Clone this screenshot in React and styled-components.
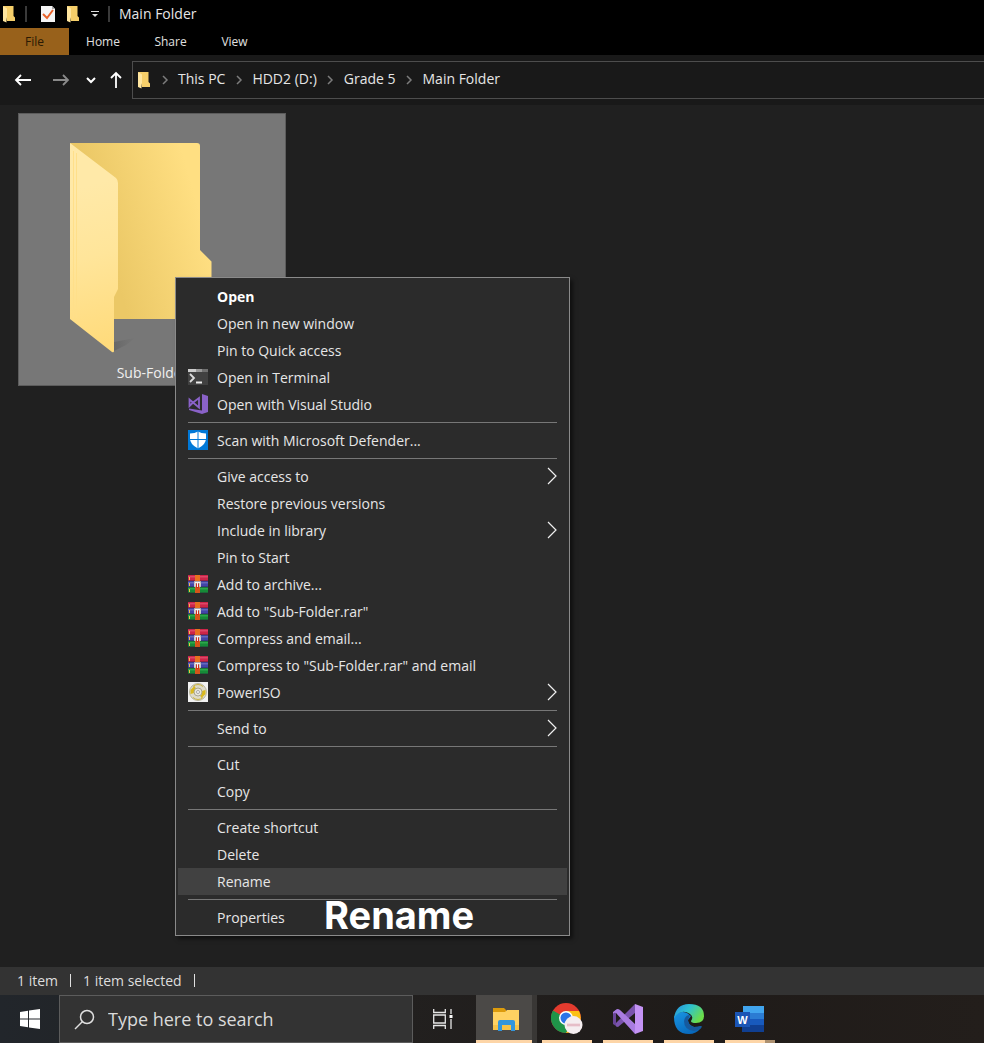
import React from "react";
import styled, { createGlobalStyle, css } from "styled-components";

const uiFont = `"Open Sans", "Noto Sans", "Liberation Sans", sans-serif`;

const GlobalStyle = createGlobalStyle`
  * { box-sizing: border-box; }
  body { margin: 0; background: #202020; color: #e6e6e6; font-family: ${uiFont}; font-size: 14px; }
  button, input { font: inherit; color: inherit; }
  svg { display: block; flex: none; }
`;

const bareButton = css`
  display: flex;
  align-items: center;
  justify-content: center;
  margin: 0;
  padding: 0;
  border: 0;
  background: none;
`;

const Page = styled.div`
  display: flex;
  flex-direction: column;
  min-height: 100vh;
`;

/* ---------- window chrome ---------- */

const TitleBar = styled.header`
  display: flex;
  align-items: center;
  height: 28px;
  padding-left: 2px;
  background: #000;
`;

const Divider = styled.span`
  width: ${(p) => p.$width || 2}px;
  height: ${(p) => p.$height || 16}px;
  background: ${(p) => p.$color || "#3a3a3a"};
`;

const Title = styled.h1`
  margin: 0 0 0 5px;
  font-size: 14px;
  font-weight: 400;
  line-height: 28px;
`;

const QuickButton = styled.button`
  ${bareButton}
  width: ${(p) => p.$width}px;
  height: 28px;
`;

const Ribbon = styled.nav`
  display: flex;
  height: 27px;
  background: #000;
`;

const Tab = styled.button`
  ${bareButton}
  width: ${(p) => p.$width}px;
  font-size: 12px;
  background: ${(p) => (p.$file ? "#98611b" : "none")};
  color: ${(p) => (p.$file ? "#2a1a04" : "#e0e0e0")};
`;

const AddressRow = styled.div`
  display: flex;
  align-items: center;
  height: 50px;
  background: #191919;
`;

const NavButton = styled.button`
  ${bareButton}
  width: ${(p) => p.$width}px;
  height: 38px;
`;

const NavGroup = styled.div`
  display: flex;
  width: 132px;
  padding-left: 4px;
`;

const AddressBox = styled.nav`
  display: flex;
  flex: 1;
  align-items: center;
  height: 38px;
  padding-left: 4px;
  border: 1px solid #4d4d4d;
  border-right: 0;
`;

const Crumb = styled.a`
  line-height: 18px;
  padding-bottom: 2px;
  color: inherit;
  text-decoration: none;
  white-space: nowrap;
`;

const CrumbArrow = styled.span`
  display: flex;
  justify-content: center;
  width: 27px;
`;

/* ---------- folder view ---------- */

const Content = styled.main`
  position: relative;
  flex: 1;
  min-height: 862px;
  padding: 8px 18px;
  background: #202020;
`;

const Tile = styled.button`
  ${bareButton}
  flex-direction: column;
  width: 268px;
  border: 1px solid #5c5c5c;
  background: #777;
`;

const TileLabel = styled.span`
  line-height: 25px;
  color: #f0f0f0;
`;

const Menu = styled.div`
  position: absolute;
  left: 175px;
  top: 172px;
  width: 395px;
  padding: 5px 2px 4px;
  border: 1px solid #8a8a8a;
  background: #2b2b2b;
  box-shadow: 3px 3px 4px rgba(0, 0, 0, 0.5);
`;

const MenuRow = styled.button`
  ${bareButton}
  justify-content: flex-start;
  width: 100%;
  height: 27px;
  padding: 0 10px;
  background: ${(p) => (p.$active ? "#414141" : "none")};
  font-weight: ${(p) => (p.$strong ? 700 : 400)};
  color: ${(p) => (p.$strong ? "#fff" : "#e6e6e6")};
`;

const IconSlot = styled.span`
  width: 29px;
  padding-bottom: 2px;
`;

const RowText = styled.span`
  flex: 1;
  text-align: left;
  white-space: nowrap;
`;

const Separator = styled.hr`
  height: 1px;
  margin: 4px 10px;
  border: 0;
  background: #777;
`;

const Caption = styled.div`
  position: absolute;
  left: 148px;
  bottom: -1px;
  font: 700 38px/42px Inter, "Liberation Sans", sans-serif;
  color: #fff;
`;

/* ---------- status bar and taskbar ---------- */

const StatusBar = styled.footer`
  display: flex;
  align-items: center;
  gap: 12px;
  height: 28px;
  padding: 0 17px 2px;
  background: #333;
  color: #dedede;
`;

const Taskbar = styled.nav`
  display: flex;
  height: 48px;
  background: linear-gradient(90deg, #22262b 0, #22201f 400px, #1f1b19 700px, #231e1b 100%);
`;

const StartButton = styled.button`
  ${bareButton}
  width: 59px;
`;

const SearchBox = styled.label`
  display: flex;
  align-items: center;
  gap: 13px;
  width: 354px;
  padding-left: 14px;
  border: 1px solid #5c5c5c;
  background: #333;
`;

const SearchInput = styled.input`
  flex: 1;
  min-width: 0;
  padding: 0;
  border: 0;
  outline: 0;
  background: none;
  font-size: 18px;
  &::placeholder { color: #dadada; opacity: 1; }
`;

const TaskView = styled.button`
  ${bareButton}
  width: 63px;
  padding-right: 4px;
`;

const AppButton = styled.button`
  ${bareButton}
  position: relative;
  width: 61px;
  padding-right: 2px;
  &::after {
    content: "";
    position: absolute;
    left: 5px;
    right: 6px;
    bottom: 0;
    height: 3px;
    background: #fdd5a7;
    border-right: ${(p) => (p.$stacked ? "10px solid #ad9171" : "0")};
  }
`;

const ExplorerApp = styled.button`
  ${bareButton}
  width: 61px;
  border-right: 5px solid #393735;
  padding-left: 3px;
  box-shadow: inset 0 -3px #fdd5a7;
  background: #4b4947;
`;

/* ---------- icons ---------- */

const SmallFolder = () => (
  <svg width="14" height="18" viewBox="0 0 14 18" aria-hidden="true">
    <path d="M1 1h10.500v10l1.500 1.500V16H5z" fill="#f6cf6a" />
    <path d="M1 1l4 2.500V12l-.5 1v4.500L1 16z" fill="#ffe6a0" />
  </svg>
);

const CheckPage = () => (
  <svg width="16" height="18" viewBox="0 0 16 18" aria-hidden="true">
    <path d="M1 1h11l3 3v13H1z" fill="#f4f4f4" />
    <path d="M12 1v3h3z" fill="#aaa" />
    <path d="M3 9l4 4 6-8" fill="none" stroke="#e8622a" strokeWidth="2" />
  </svg>
);

const Chevron = () => (
  <svg width="8" height="10" viewBox="0 0 8 10" aria-hidden="true">
    <path d="M2 1l4 4-4 4" fill="none" stroke="#7c7c7c" strokeWidth="1.500" />
  </svg>
);

const Arrow = ({ color = "#fff", turn = 0 }) => (
  <svg width="18" height="18" viewBox="0 0 18 18" aria-hidden="true">
    <g transform={`rotate(${turn} 9 9)`} fill="none" stroke={color} strokeWidth="1.800">
      <path d="M2 9h15M7 4L2 9l5 5" />
    </g>
  </svg>
);

const SubmenuArrow = () => (
  <svg width="10" height="20" viewBox="0 0 10 20" aria-hidden="true">
    <path d="M1 1l8 8-8 8" fill="none" stroke="#f0f0f0" strokeWidth="1.200" />
  </svg>
);

const BigFolder = () => (
  <svg width="256" height="246" viewBox="24 114 256 246" aria-hidden="true">
    <defs>
      <linearGradient id="back" gradientUnits="userSpaceOnUse" x1="100" y1="260" x2="205" y2="230">
        <stop offset="0.1" stopColor="#ebc866" />
        <stop offset="1" stopColor="#ffdf82" />
      </linearGradient>
      <linearGradient id="front" gradientUnits="userSpaceOnUse" x1="75" y1="170" x2="120" y2="340">
        <stop offset="0.1" stopColor="#ffe9a8" />
        <stop offset="0.5" stopColor="#ffe59a" />
        <stop offset="1" stopColor="#ffdb7c" />
      </linearGradient>
      <linearGradient id="shade" x1="0" y1="0" x2="1" y2="0">
        <stop offset="0" stopColor="#686868" />
        <stop offset="1" stopColor="#777" />
      </linearGradient>
    </defs>
    <path d="M114 351l12-6 9-7-21 4z" fill="url(#shade)" />
    <path d="M70 143h127q3 0 3 3v104l11.500 11.500v57.500H100z" fill="url(#back)" />
    <path d="M70 143l46 35q2 2 2 5v106l-4 8v54q0 2-2 1l-42-33z" fill="url(#front)" />
    <path d="M73.500 151v167M76.500 153v165" stroke="#ffdf8a" strokeWidth="1" />
  </svg>
);

const TerminalIcon = () => (
  <svg width="20" height="20" viewBox="0 0 20 20" aria-hidden="true">
    <path d="M0 2h20v16H0z" fill="#414141" />
    <path d="M0 2h8v3H0z" fill="#ccc" />
    <path d="M8 2h6v3H8z" fill="#999" />
    <path d="M14 2h6v3h-6z" fill="#707070" />
    <path d="M2 7l4 4-4 4" fill="none" stroke="#ddd" strokeWidth="1.800" />
    <path d="M8 15.500h6" stroke="#eee" strokeWidth="2" />
  </svg>
);

const StudioIcon = () => (
  <svg width="20" height="20" viewBox="0 0 20 20" aria-hidden="true">
    <path d="M14 0l6 2v16l-6 2-13-4v-1.500l13 2z" fill="#8a62c8" />
    <path d="M1.500 5.500L5 8.500 11 4v9.500L5 8.500 1.500 12z" fill="none" stroke="#8a62c8" strokeWidth="1.800" />
  </svg>
);

const DefenderIcon = () => (
  <svg width="20" height="20" viewBox="0 0 20 20" aria-hidden="true">
    <path d="M0 0h20v20H0z" fill="#0078d7" />
    <path d="M10 1.500q3 2 8 2v5q0 6-8 10-8-4-8-10v-5q5 0 8-2z" fill="#fff" />
    <path d="M10 1v18M1 9.500h18" stroke="#0078d7" />
  </svg>
);

const ArchiveIcon = () => (
  <svg width="20" height="20" viewBox="0 0 20 20" aria-hidden="true">
    <path d="M0 1h20v6H0z" fill="#cc2549" />
    <path d="M0 2h20v1.500H0z" fill="#dc4767" />
    <path d="M0 7h20v6H0z" fill="#4145a8" />
    <path d="M0 8h20v1.500H0z" fill="#6569bd" />
    <path d="M0 13h20v6H0z" fill="#168a37" />
    <path d="M0 14h20v1.500H0z" fill="#2da64b" />
    <path d="M0 6.800h20M0 12.800h20M0 18.800h20" stroke="#28233a" strokeWidth="0.500" />
    <path d="M1.500 3v3M1.500 9v3M1.500 15v3" stroke="#f0bd4a" />
    <path d="M7 1h5v18H7z" fill="#e8701f" />
    <path d="M7 14h5v5H7z" fill="#d4551a" />
    <path d="M6 7h7v6H6z" fill="#a9a5ad" />
    <path d="M8 9.500h3V14H8z" fill="#d1301d" />
    <path d="M7 12.500V8.500h5v4M9.500 9v4" fill="none" stroke="#f6f2f2" strokeWidth="1" />
  </svg>
);

const DiscIcon = () => (
  <svg width="20" height="20" viewBox="0 0 20 20" aria-hidden="true">
    <path d="M0 0h20v20H0z" fill="#f1f1f1" />
    <circle cx="10" cy="10" r="8.500" fill="#dedbc9" stroke="#b9b69e" />
    <path d="M10 10L2.500 12V8l4-4zM10 10l7.500-2v4l-4 4z" fill="#d9b91e" />
    <path d="M5 4.500q5-4 10 0M5 15.500q5 4 10 0" fill="none" stroke="#cbb544" />
    <circle cx="10" cy="10" r="4" fill="#e9e7d9" stroke="#aaa78f" />
    <circle cx="10" cy="10" r="1.500" fill="#fff" stroke="#888" strokeWidth="0.700" />
  </svg>
);

const WindowsIcon = () => (
  <svg width="20" height="20" viewBox="0 0 20 20" aria-hidden="true">
    <path d="M0 3l8-1.200V9.500H0zM9 1.600L20 0v9.500H9zM0 10.500h8v7.700L0 17zM9 10.500h11V20L9 18.400z" fill="#fff" />
  </svg>
);

const SearchIcon = () => (
  <svg width="21" height="21" viewBox="0 0 21 21" aria-hidden="true">
    <g fill="none" stroke="#e0e0e0" strokeWidth="1.500">
      <circle cx="13" cy="8" r="6.500" />
      <path d="M8.500 12.500L1 20" />
    </g>
  </svg>
);

const TaskViewIcon = () => (
  <svg width="22" height="20" viewBox="0 0 22 20" aria-hidden="true">
    <g fill="none" stroke="#e6e6e6" strokeWidth="1.300">
      <path d="M1.700 0v3.500h11.600V0M1.700 6h11.600v8H1.700zM1.700 20v-3.500h11.600V20M19 0v5M19 10v10" />
    </g>
    <path d="M17.500 6h3v3h-3z" fill="#fff" />
  </svg>
);

const ExplorerIcon = () => (
  <svg width="28" height="26" viewBox="0 0 28 26" aria-hidden="true">
    <path d="M1 2h11l2 2v5H1z" fill="#dc9b0c" />
    <path d="M1 6h12l2-2h12v20H1z" fill="#ffd262" />
    <path d="M1 19h26v5H1z" fill="#f7c348" />
    <path d="M6 25V16q0-2 2-2h13q2 0 2 2v9h-4v-6h-9v6z" fill="#3396dc" />
  </svg>
);

const ChromeIcon = () => (
  <svg width="32" height="32" viewBox="0 0 32 32" aria-hidden="true">
    <circle cx="15" cy="15" r="15" fill="#e33b2e" />
    <path d="M15 15L2 7.500A15 15 0 0 0 15 30l7-11z" fill="#1f9549" />
    <path d="M15 8h13a15 15 0 0 1-13 22l7-12z" fill="#fbc116" />
    <circle cx="15" cy="15" r="7" fill="#fff" />
    <circle cx="15" cy="15" r="5.500" fill="#2b74e8" />
    <circle cx="22.500" cy="22" r="9" fill="#f5eef0" />
    <path d="M16 22h13" stroke="#ecccd4" strokeWidth="3" />
    <path d="M16 22h13" stroke="#e0b0bb" strokeWidth="1" />
  </svg>
);

const StudioAppIcon = () => (
  <svg width="30" height="30" viewBox="0 0 30 30" aria-hidden="true">
    <path d="M0 9l3-3v16l-3-2z" fill="#6a4699" />
    <path d="M3 22.500l2 .5L22 9V0L3 19z" fill="#7a53ad" />
    <path d="M0 8l4-3q2 0 3 1l15 14v10L3 9q-2-1-3 1z" fill="#a97ce0" />
    <path d="M22 0l8 3v24l-8 3z" fill="#c493f4" />
  </svg>
);

const EdgeIcon = () => (
  <svg width="30" height="30" viewBox="0 0 30 30" aria-hidden="true">
    <defs>
      <linearGradient id="edgeTop" x1="0" y1="0" x2="1" y2="0.500">
        <stop offset="0.100" stopColor="#2797dd" />
        <stop offset="0.500" stopColor="#2fc2cf" />
        <stop offset="1" stopColor="#6bdd4b" />
      </linearGradient>
      <linearGradient id="edgeBody" x1="0" y1="0" x2="0.600" y2="1">
        <stop offset="0" stopColor="#1995e3" />
        <stop offset="1" stopColor="#0868bb" />
      </linearGradient>
    </defs>
    <path d="M0 13Q5 6 13 9l4 3-3 4q0 5 6 7 4 0 7-1 1 0 0 2-5 6-12 6Q0 30 0 13z" fill="url(#edgeBody)" />
    <path d="M10 17q1-6 6-6l-2 5q0 5 6 7 4 0 7-1 1 0 0 2-3 3-7 3-10-1-10-10z" fill="#165a9e" />
    <path d="M0 14Q2 0 15 0q15 0 15 12 0 7-8 7-5 0-5-2 3-4-1-7Q7 4 0 14z" fill="url(#edgeTop)" />
  </svg>
);

const WordIcon = () => (
  <svg width="30" height="28" viewBox="0 0 30 28" aria-hidden="true">
    <path d="M8 1h21v7H8z" fill="#41a5ee" />
    <path d="M7 8h22v6H7z" fill="#2b7cd3" />
    <path d="M7 14h22v6H7z" fill="#185abd" />
    <path d="M7 20h22v7H7z" fill="#103f91" />
    <path d="M0 7h15v15H0z" fill="#1b55b5" />
    <text x="7.500" y="18.500" textAnchor="middle" fontFamily="Liberation Sans, sans-serif" fontWeight="700" fontSize="11" fill="#fff">W</text>
  </svg>
);

/* ---------- data ---------- */

const menuGroups = [
  [
    { text: "Open", strong: true },
    { text: "Open in new window" },
    { text: "Pin to Quick access" },
    { text: "Open in Terminal", Icon: TerminalIcon },
    { text: "Open with Visual Studio", Icon: StudioIcon },
  ],
  [{ text: "Scan with Microsoft Defender...", Icon: DefenderIcon }],
  [
    { text: "Give access to", submenu: true },
    { text: "Restore previous versions" },
    { text: "Include in library", submenu: true },
    { text: "Pin to Start" },
    { text: "Add to archive...", Icon: ArchiveIcon },
    { text: 'Add to "Sub-Folder.rar"', Icon: ArchiveIcon },
    { text: "Compress and email...", Icon: ArchiveIcon },
    { text: 'Compress to "Sub-Folder.rar" and email', Icon: ArchiveIcon },
    { text: "PowerISO", Icon: DiscIcon, submenu: true },
  ],
  [{ text: "Send to", submenu: true }],
  [{ text: "Cut" }, { text: "Copy" }],
  [{ text: "Create shortcut" }, { text: "Delete" }, { text: "Rename", active: true }],
  [{ text: "Properties" }],
];

const crumbs = ["This PC", "HDD2 (D:)", "Grade 5", "Main Folder"];

const apps = [
  { name: "Chrome", Icon: ChromeIcon },
  { name: "Visual Studio", Icon: StudioAppIcon },
  { name: "Edge", Icon: EdgeIcon },
  { name: "Word", Icon: WordIcon, stacked: true },
];

export default function App() {
  return (
    <Page>
      <GlobalStyle />
      <TitleBar>
        <SmallFolder />
        <QuickButton as="span" $width={20}><Divider /></QuickButton>
        <QuickButton $width={24} aria-label="Properties"><CheckPage /></QuickButton>
        <QuickButton $width={26} aria-label="New folder"><SmallFolder /></QuickButton>
        <QuickButton $width={18} aria-label="Customize toolbar">
          <svg width="8" height="8" viewBox="0 0 8 8" aria-hidden="true">
            <path d="M0 1.500h8" stroke="#ddd" />
            <path d="M1 4h6L4 7z" fill="#ddd" />
          </svg>
        </QuickButton>
        <QuickButton as="span" $width={10}><Divider /></QuickButton>
        <Title>Main Folder</Title>
      </TitleBar>
      <Ribbon aria-label="Ribbon">
        <Tab $file $width={69}>File</Tab>
        <Tab $width={68}>Home</Tab>
        <Tab $width={67}>Share</Tab>
        <Tab $width={61}>View</Tab>
      </Ribbon>
      <AddressRow>
        <NavGroup>
          <NavButton $width={38} aria-label="Back"><Arrow /></NavButton>
          <NavButton $width={38} aria-label="Forward"><Arrow color="#8a8a8a" turn={180} /></NavButton>
          <NavButton $width={22} aria-label="Recent locations">
            <svg width="10" height="8" viewBox="0 0 10 8" aria-hidden="true">
              <path d="M1 2l4 4 4-4" fill="none" stroke="#fff" strokeWidth="2" />
            </svg>
          </NavButton>
          <NavButton $width={28} aria-label="Up"><Arrow turn={90} /></NavButton>
        </NavGroup>
        <AddressBox aria-label="Address">
          <SmallFolder />
          {crumbs.map((name) => (
            <React.Fragment key={name}>
              <CrumbArrow><Chevron /></CrumbArrow>
              <Crumb href="#">{name}</Crumb>
            </React.Fragment>
          ))}
        </AddressBox>
      </AddressRow>

      <Content>
        <Tile>
          <BigFolder />
          <TileLabel>Sub-Folder</TileLabel>
        </Tile>
        <Menu role="menu">
          {menuGroups.map((group, g) => (
            <React.Fragment key={g}>
              {g > 0 && <Separator />}
              {group.map(({ text, Icon, strong, active, submenu }) => (
                <MenuRow key={text} role="menuitem" $strong={strong} $active={active}>
                  <IconSlot>{Icon && <Icon />}</IconSlot>
                  <RowText>{text}</RowText>
                  {submenu && <SubmenuArrow />}
                </MenuRow>
              ))}
            </React.Fragment>
          ))}
          <Caption>Rename</Caption>
        </Menu>
      </Content>

      <StatusBar>
        <span>1 item</span>
        <Divider $width={1} $height={13} $color="#e0e0e0" />
        <span>1 item selected</span>
        <Divider $width={1} $height={13} $color="#e0e0e0" />
      </StatusBar>
      <Taskbar aria-label="Taskbar">
        <StartButton aria-label="Start"><WindowsIcon /></StartButton>
        <SearchBox>
          <SearchIcon />
          <SearchInput type="text" aria-label="Search" placeholder="Type here to search" />
        </SearchBox>
        <TaskView aria-label="Task view"><TaskViewIcon /></TaskView>
        <ExplorerApp aria-label="File Explorer"><ExplorerIcon /></ExplorerApp>
        {apps.map(({ name, Icon, stacked }) => (
          <AppButton key={name} aria-label={name} $stacked={stacked}><Icon /></AppButton>
        ))}
      </Taskbar>
    </Page>
  );
}
